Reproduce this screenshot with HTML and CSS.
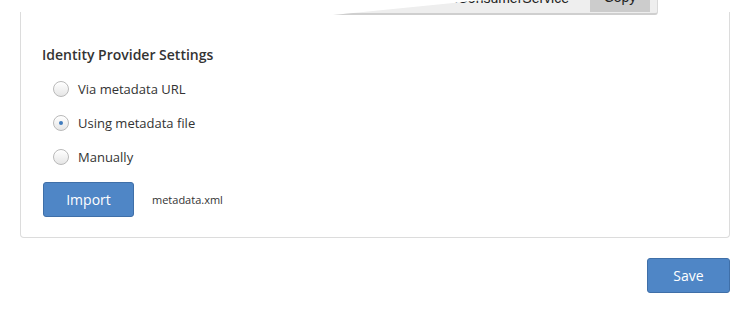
FILE: index.html
```html
<!DOCTYPE html>
<html>
<head>
<meta charset="utf-8">
<link rel="stylesheet" href="styles.css">
</head>
<body>
<div class="page">
  <div class="card">
    <h2 class="title">Identity Provider Settings</h2>
    <div class="options">
      <label class="option"><span class="radio"></span><span class="label">Via metadata URL</span></label>
      <label class="option"><span class="radio checked"></span><span class="label">Using metadata file</span></label>
      <label class="option"><span class="radio"></span><span class="label">Manually</span></label>
    </div>
    <div class="import-row">
      <button class="btn btn-import">Import</button>
      <span class="filename">metadata.xml</span>
    </div>
  </div>
  <div class="actions">
    <button class="btn btn-save">Save</button>
  </div>
</div>
<div class="popover">
  <span class="pop-text">AssertionConsumerService</span>
  <span class="pop-copy">Copy</span>
</div>
</body>
</html>
```

FILE: styles.css
```css
html, body {
  margin: 0;
  padding: 0;
  background: #fff;
  font-family: "Open Sans", "Liberation Sans", sans-serif;
  color: #333;
}
.page {
  padding: 0 20px 0 20px;
  width: 710px;
}
.card {
  margin-top: 12px;
  border: 1px solid #dcdcdc;
  border-top: none;
  border-radius: 0 0 4px 4px;
  padding: 33px 21px 20px 21px;
}
.title {
  margin: 0;
  font-size: 14px;
  line-height: 20px;
  font-weight: 600;
  color: #333;
}
.options {
  margin-top: 7px;
  display: flex;
  flex-direction: column;
}
.option {
  height: 34px;
  display: flex;
  align-items: center;
  padding-left: 11px;
}
.radio {
  box-sizing: border-box;
  width: 16px;
  height: 16px;
  border-radius: 50%;
  border: 1px solid #b9b9b9;
  background: linear-gradient(#ffffff, #e6e6e6);
  box-shadow: inset 0 1px 0 #fff;
  display: flex;
  align-items: center;
  justify-content: center;
}
.radio.checked::after {
  content: "";
  width: 4px;
  height: 4px;
  border-radius: 50%;
  background: #3f7bbd;
}
.label {
  margin-left: 9px;
  font-size: 13px;
  line-height: 18px;
  color: #333;
}
.import-row {
  margin-top: 8px;
  padding-left: 1px;
  display: flex;
  align-items: center;
}
.btn {
  box-sizing: border-box;
  background: #4f86c6;
  border: 1px solid #3f6fa8;
  border-radius: 3px;
  color: #fff;
  font-family: "Open Sans", "Liberation Sans", sans-serif;
  font-size: 14px;
  height: 35px;
  padding: 0;
}
.btn-import {
  width: 91px;
}
.filename {
  margin-left: 18px;
  font-size: 11px;
  color: #333;
}
.actions {
  margin-top: 20px;
  display: flex;
  justify-content: flex-end;
}
.btn-save {
  width: 83px;
}
.popover {
  position: absolute;
  left: 333px;
  top: -12px;
  width: 325px;
  height: 27px;
  box-sizing: border-box;
  background: #eeeeee;
  border-bottom: 2px solid #cfcfcf;
  border-right: 1px solid #d8d8d8;
  border-radius: 0 0 3px 0;
  clip-path: polygon(0 100%, 140px 13px, 100% 0, 100% 100%);
  overflow: hidden;
}
.pop-text {
  position: absolute;
  right: 88px;
  top: 1px;
  font-size: 14px;
  line-height: 18px;
  color: #222;
  font-family: "Liberation Sans", sans-serif;
}
.pop-copy {
  position: absolute;
  right: 7px;
  top: 0;
  width: 60px;
  height: 24px;
  background: #cccccc;
  font-size: 14px;
  line-height: 18px;
  text-align: center;
  color: #222;
  font-family: "Liberation Sans", sans-serif;
}
```
